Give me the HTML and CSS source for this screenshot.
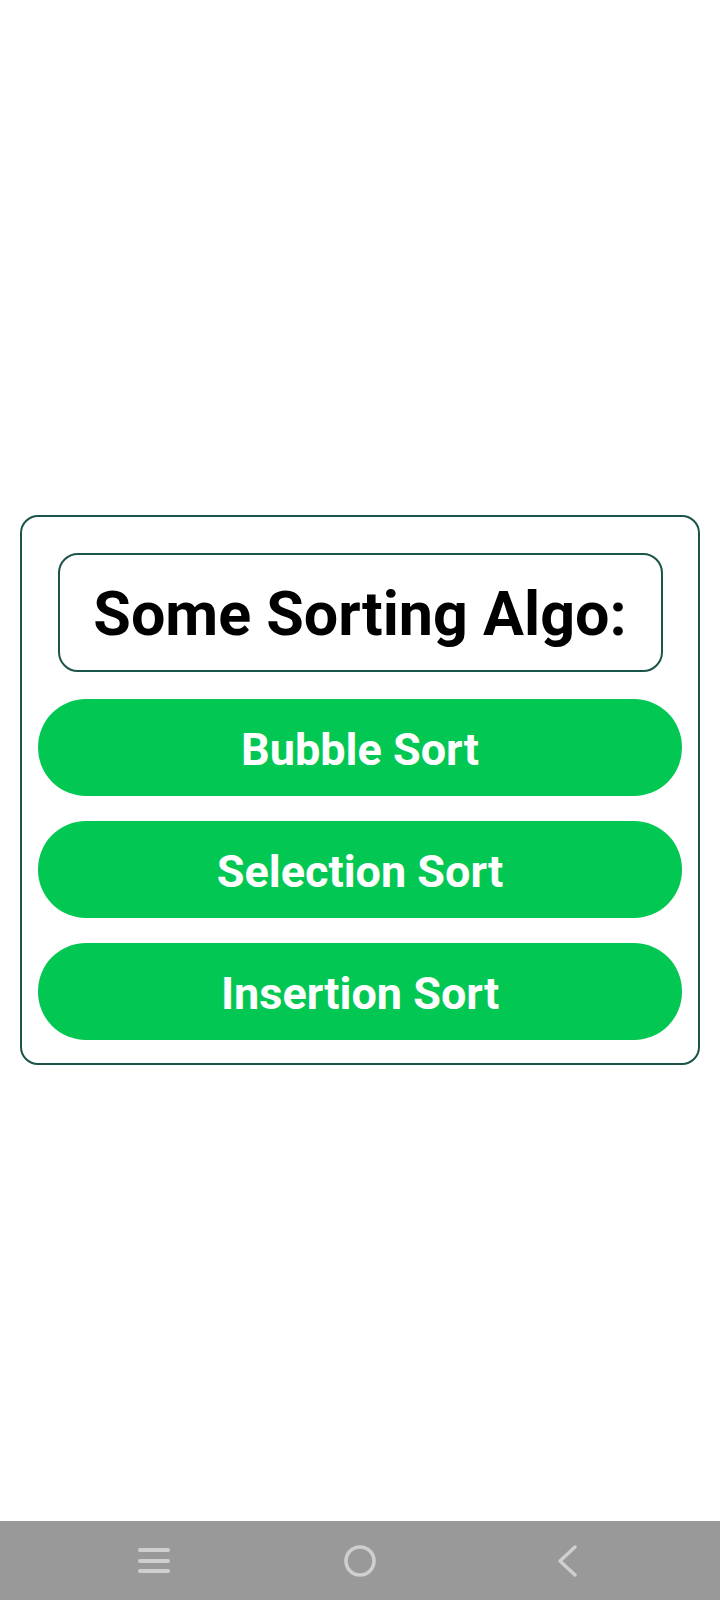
FILE: index.html
```html
<!DOCTYPE html>
<html>
<head>
<meta charset="utf-8">
<link rel="stylesheet" href="styles.css">
</head>
<body>
<div class="screen">
  <div class="status"></div>
  <main class="content">
    <div class="card">
      <div class="title-box"><h1 class="title">Some Sorting Algo:</h1></div>
      <div class="btn">Bubble Sort</div>
      <div class="btn">Selection Sort</div>
      <div class="btn">Insertion Sort</div>
    </div>
  </main>
  <nav class="navbar">
    <svg class="nav-icon" width="40" height="40" viewBox="0 0 40 40">
      <g stroke="#cfcfcf" stroke-width="4" stroke-linecap="round">
        <line x1="6" y1="9" x2="34" y2="9"/>
        <line x1="6" y1="20" x2="34" y2="20"/>
        <line x1="6" y1="30" x2="34" y2="30"/>
      </g>
    </svg>
    <svg class="nav-icon" width="40" height="40" viewBox="0 0 40 40">
      <circle cx="20" cy="20" r="14" fill="none" stroke="#cfcfcf" stroke-width="3.5"/>
    </svg>
    <svg class="nav-icon" width="40" height="40" viewBox="0 0 40 40">
      <polyline points="29,6 14,20 29,34" fill="none" stroke="#cfcfcf" stroke-width="3.5" stroke-linecap="round" stroke-linejoin="round"/>
    </svg>
  </nav>
</div>
</body>
</html>
```

FILE: styles.css
```css
html, body {
  margin: 0;
  padding: 0;
  background: #ffffff;
}
.screen {
  width: 720px;
  height: 1600px;
  display: flex;
  flex-direction: column;
  font-family: Roboto, "Liberation Sans", sans-serif;
}
.status {
  height: 58px;
  flex: none;
}
.content {
  flex: 1;
  display: flex;
  align-items: center;
  justify-content: center;
}
.card {
  width: 680px;
  box-sizing: border-box;
  border: 2px solid #1b5449;
  border-radius: 18px;
  padding: 36px 16px 23px;
  display: flex;
  flex-direction: column;
  align-items: center;
  gap: 25px;
}
.title-box {
  width: 605px;
  height: 119px;
  box-sizing: border-box;
  border: 2px solid #1b5449;
  border-radius: 20px;
  padding-top: 5px;
  display: flex;
  align-items: center;
  justify-content: center;
  margin-bottom: 2px;
}
.title {
  margin: 0;
  font-size: 61px;
  font-weight: 700;
  color: #000000;
  line-height: 1;
}
.btn {
  width: 644px;
  height: 97px;
  box-sizing: border-box;
  padding-top: 4px;
  border-radius: 48px;
  background: #02c853;
  color: #ffffff;
  font-size: 45px;
  font-weight: 700;
  display: flex;
  align-items: center;
  justify-content: center;
}
.navbar {
  height: 79px;
  flex: none;
  background: #999999;
  display: flex;
  align-items: center;
  justify-content: space-between;
  padding: 0 134px 0 134px;
}
.nav-icon {
  display: block;
}
```
